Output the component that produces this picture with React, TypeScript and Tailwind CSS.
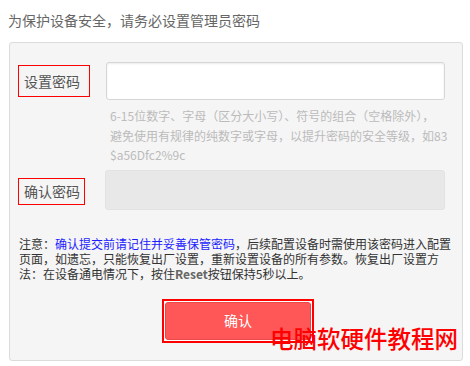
export default function App() {
  return (
    <div
      className="relative w-[470px] h-[366px] overflow-hidden bg-white"
      style={{ fontFamily: '"Noto Sans CJK SC", "Noto Sans", sans-serif' }}
    >
      {/* Heading */}
      <p className="pl-2 pt-[11px] text-[14px] leading-[18px] text-[#666]">
        为保护设备安全，请务必设置管理员密码
      </p>

      {/* Form panel */}
      <div className="mt-[13px] ml-[9px] w-[454px] h-[319px] rounded-[3px] border border-[#dcdcdc] bg-[#f5f5f5]">
        {/* Set password */}
        <div className="flex items-start pt-[19px]">
          <div className="ml-[8px] mt-[3px] flex h-[32px] w-[72px] items-center border border-[#f00] pl-[5px] text-[14px] text-[#555]">
            设置密码
          </div>
          <div className="ml-[16px] h-[38px] w-[339px] rounded-[3px] border border-[#d6d6d6] bg-white shadow-[inset_0_1px_2px_rgba(0,0,0,0.08)]" />
        </div>

        <div className="ml-[100px] mt-[6px] text-[12px] leading-[19.5px] text-[#bbb] whitespace-nowrap">
          <span className="block">6-15位数字、字母（区分大小写）、符号的组合（空格除外），</span>
          <span className="block">避免使用有规律的纯数字或字母，以提升密码的安全等级，如83</span>
          <span className="block">$a56Dfc2%9c</span>
        </div>

        {/* Confirm password */}
        <div className="flex items-start mt-[5px]">
          <div className="ml-[8px] mt-[8px] flex h-[27px] w-[67px] items-center border border-[#f00] pl-[5px] text-[14px] text-[#555]">
            确认密码
          </div>
          <div className="ml-[20px] h-[40px] w-[340px] rounded-[3px] border border-[#e2e2e2] bg-[#e8e8e8]" />
        </div>

        {/* Notice */}
        <div className="ml-[9px] mt-[26px] text-[12px] leading-[15px] text-[#333] whitespace-nowrap">
          <p>
            注意：<span className="text-[#1c1cff]">确认提交前请记住并妥善保管密码</span>，后续配置设备时需使用该密码进入配置
          </p>
          <p>页面，如遗忘，只能恢复出厂设置，重新设置设备的所有参数。恢复出厂设置方</p>
          <p>
            法：在设备通电情况下，按住<span className="font-bold text-[#666]">Reset</span>按钮保持5秒以上。
          </p>
        </div>

        {/* Submit */}
        <div className="ml-[152px] mt-[18px] h-[44px] w-[152px] border-2 border-[#f00] bg-white p-px">
          <button className="flex h-full w-full items-center justify-center rounded-[3px] border border-[#e84848] bg-[#ff5757] text-[14px] text-white">
            确认
          </button>
        </div>
      </div>

      {/* Watermark */}
      <div className="absolute left-[270px] top-[324px] text-[23.5px] leading-[28px] font-medium text-[#f00] whitespace-nowrap">
        电脑软硬件教程网
      </div>
    </div>
  );
}
